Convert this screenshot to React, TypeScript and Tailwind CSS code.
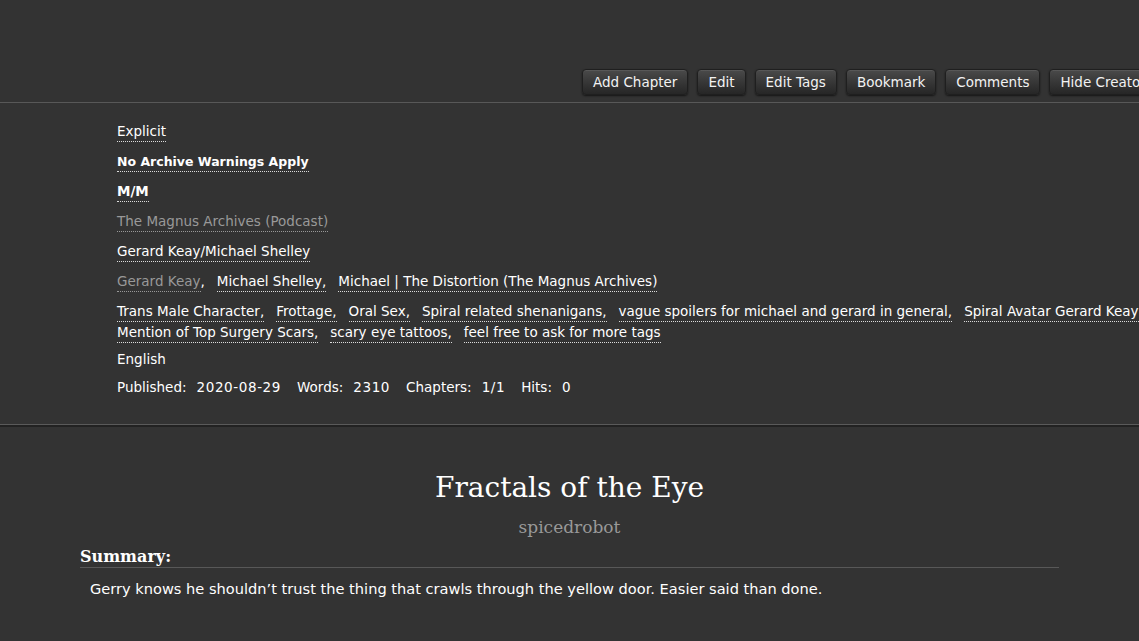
import React from "react";

const sans = { fontFamily: '"DejaVu Sans", Verdana, sans-serif' };
const serif = { fontFamily: '"DejaVu Serif", Georgia, serif' };

const buttons = ["Add Chapter", "Edit", "Edit Tags", "Bookmark", "Comments", "Hide Creator's Style"];

type Tag = { name: string; dim?: boolean; bold?: boolean; small?: boolean };

const TagLink: React.FC<{ tag: Tag; last?: boolean }> = ({ tag, last }) => (
  <span className="whitespace-nowrap mr-[12px]">
    {tag.dim ? (
      <>
        <a href="#" className="text-[#999] border-b border-dotted border-[#999] pb-[2px]">
          {tag.name}
        </a>
        {!last && <span className="text-[#fff]">,</span>}
      </>
    ) : (
      <a
        href="#"
        className={`text-[#fff] border-b border-dotted border-[#ddd] pb-[2px] ${tag.bold ? "font-bold" : ""} ${
          tag.small ? "text-[12.5px]" : ""
        }`}
      >
        {tag.name}
        {!last && ","}
      </a>
    )}
  </span>
);

const TagRow: React.FC<{ tags: Tag[] }> = ({ tags }) => (
  <div className="flex flex-wrap leading-[21px]">
    {tags.map((t, i) => (
      <TagLink key={t.name} tag={t} last={i === tags.length - 1} />
    ))}
  </div>
);

const freeforms: Tag[] = [
  { name: "Trans Male Character" },
  { name: "Frottage" },
  { name: "Oral Sex" },
  { name: "Spiral related shenanigans" },
  { name: "vague spoilers for michael and gerard in general" },
  { name: "Spiral Avatar Gerard Keay" },
  { name: "Mention of Top Surgery Scars" },
  { name: "scary eye tattoos" },
  { name: "feel free to ask for more tags" },
];

const stats = [
  ["Published:", "2020-08-29"],
  ["Words:", "2310"],
  ["Chapters:", "1/1"],
  ["Hits:", "0"],
];

export default function App() {
  return (
    <div className="min-h-screen w-full bg-[#333] text-[#ddd] overflow-hidden" style={sans}>
      {/* action buttons */}
      <div className="h-[103px] border-b border-[#585858] flex items-end pb-[7px]">
        <ul className="flex gap-[9px] ml-[582px] whitespace-nowrap">
          {buttons.map((b) => (
            <li key={b}>
              <a
                href="#"
                className="block h-[26px] px-[10px] leading-[25px] text-[13.5px] text-[#f2f2f2] rounded-[4px] border border-[#1f1f1f] bg-gradient-to-b from-[#4a4a4a] to-[#262626] shadow-[0_1px_2px_rgba(0,0,0,0.6),inset_0_1px_0_rgba(255,255,255,0.08)]"
              >
                {b}
              </a>
            </li>
          ))}
        </ul>
      </div>

      {/* meta */}
      <div className="pl-[117px] pt-[18px] pb-[29px] text-[13.5px] border-b-2 border-[#222] shadow-[0_-1px_0_#5a5a5a_inset]">
        <div className="flex flex-col gap-[9px]">
          <TagRow tags={[{ name: "Explicit" }]} />
          <TagRow tags={[{ name: "No Archive Warnings Apply", bold: true, small: true }]} />
          <TagRow tags={[{ name: "M/M", bold: true }]} />
          <TagRow tags={[{ name: "The Magnus Archives (Podcast)", dim: true }]} />
          <TagRow tags={[{ name: "Gerard Keay/Michael Shelley" }]} />
          <TagRow
            tags={[
              { name: "Gerard Keay", dim: true },
              { name: "Michael Shelley" },
              { name: "Michael | The Distortion (The Magnus Archives)" },
            ]}
          />
          <div className="w-[1045px]">
            <TagRow tags={freeforms} />
          </div>
          <div className="leading-[18px] -mt-[2px] text-[#fff]">English</div>
          <dl className="flex leading-[18px] text-[#fff] mt-[1px]">
            {stats.map(([k, v]) => (
              <div key={k} className="flex mr-[16px]">
                <dt className="mr-[10px]">{k}</dt>
                <dd className="tracking-[0.6px]">{v}</dd>
              </div>
            ))}
          </dl>
        </div>
      </div>

      {/* preface */}
      <div className="pt-[43px] px-[80px]">
        <h2 className="text-center text-[28px] leading-[36px] text-[#fff]" style={serif}>
          Fractals of the Eye
        </h2>
        <h3 className="text-center text-[17px] leading-[24px] mt-[9px] text-[#999]" style={serif}>
          spicedrobot
        </h3>
        <div className="w-[979px] mt-[8px]">
          <h3 className="text-[16px] font-bold leading-[20px] text-[#fff] border-b border-[#585858]" style={serif}>
            Summary:
          </h3>
          <p className="pl-[10px] mt-[11px] text-[14.6px] leading-[20px] text-[#fff]">
            Gerry knows he shouldn’t trust the thing that crawls through the yellow door. Easier said than done.
          </p>
        </div>
      </div>
    </div>
  );
}
